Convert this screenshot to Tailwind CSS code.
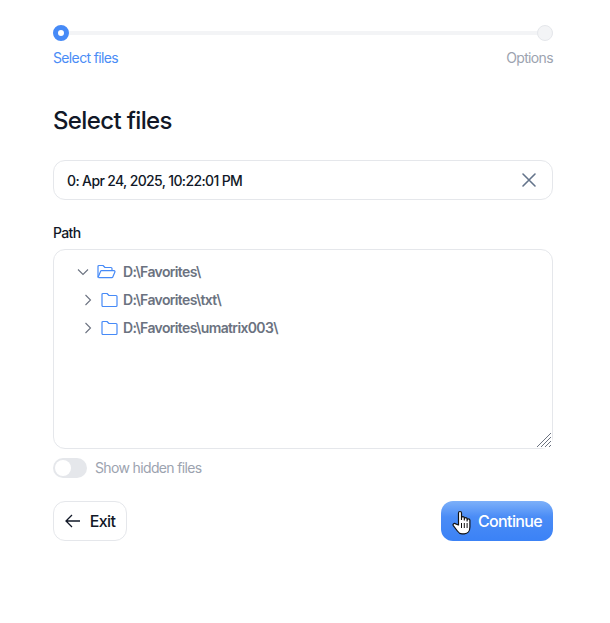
<!DOCTYPE html>
<html lang="en">
<head>
  <meta charset="UTF-8" />
  <meta name="viewport" content="width=device-width, initial-scale=1.0"/>
  <title>Select files</title>
  <script src="https://cdn.jsdelivr.net/npm/@tailwindcss/browser@4"></script>
</head>
<body class="bg-white font-['Inter',sans-serif] tracking-[-0.04em] text-[#111827]">
  <div class="w-[500px] ml-[53px] pt-[25px]">

    <!-- stepper -->
    <div class="relative flex justify-between items-center h-4">
      <div class="absolute left-0 right-0 top-[6px] h-1 bg-[#f3f4f6]"></div>
      <div class="relative w-4 h-4 rounded-full bg-white border-[5px] border-[#468af7]"></div>
      <div class="relative w-4 h-4 rounded-full bg-[#f3f4f6] border border-[#e5e7eb]"></div>
    </div>
    <div class="flex justify-between mt-[7px] text-sm leading-5">
      <span class="text-[#4a8cf6]">Select files</span>
      <span class="text-[#9ca3af]">Options</span>
    </div>

    <h1 class="mt-[37px] text-2xl leading-8 font-medium">Select files</h1>

    <!-- backup select -->
    <div class="mt-[23px] h-10 flex items-center justify-between pl-[13px] pr-[14px] border border-[#e5e7eb] rounded-xl">
      <span class="text-sm font-medium pt-[1px]">0: Apr 24, 2025, 10:22:01 PM</span>
      <svg class="w-[18px] h-[18px] text-[#64748b]" viewBox="0 0 18 18" fill="none" stroke="currentColor" stroke-width="1.6" stroke-linecap="round">
        <path d="M3 3l12 12M15 3L3 15"/>
      </svg>
    </div>

    <label class="block mt-[23px] text-sm leading-5 font-medium">Path</label>

    <!-- tree -->
    <div class="relative mt-[6px] h-[200px] border border-[#e5e7eb] rounded-xl pt-2 text-sm font-semibold text-[#6b7280]">
      <div class="flex items-center h-7 pl-[23px]">
        <svg class="w-[12px] h-[12px] text-[#6b7280]" viewBox="0 0 12 12" fill="none" stroke="currentColor" stroke-width="1.1">
          <path d="M1 3.5l5 5 5-5"/>
        </svg>
        <svg class="ml-[8px] w-[19px] h-[16px] text-[#468af7]" viewBox="0 0 19 16" fill="none" stroke="currentColor" stroke-width="1.2" stroke-linejoin="round">
          <path d="M1 13.5V2.5a1 1 0 0 1 1-1h4l2 2h6a1 1 0 0 1 1 1v2"/>
          <path d="M1 13.5l2.6-6.2a1 1 0 0 1 .9-.6H17a1 1 0 0 1 .9 1.4l-2.1 5a1 1 0 0 1-.9.6H1.5"/>
        </svg>
        <span class="ml-[7px]">D:\Favorites\</span>
      </div>
      <div class="flex items-center h-7 pl-[28px]">
        <svg class="w-[12px] h-[12px] text-[#6b7280]" viewBox="0 0 12 12" fill="none" stroke="currentColor" stroke-width="1.1">
          <path d="M3.5 1l5 5-5 5"/>
        </svg>
        <svg class="ml-[7px] w-[17px] h-[16px] text-[#468af7]" viewBox="0 0 17 16" fill="none" stroke="currentColor" stroke-width="1.2" stroke-linejoin="round">
          <path d="M1 13.5V2.5a1 1 0 0 1 1-1h4l2 2h7a1 1 0 0 1 1 1v9a1 1 0 0 1-1 1H2a1 1 0 0 1-1-1z"/>
        </svg>
        <span class="ml-[5px]">D:\Favorites\txt\</span>
      </div>
      <div class="flex items-center h-7 pl-[28px]">
        <svg class="w-[12px] h-[12px] text-[#6b7280]" viewBox="0 0 12 12" fill="none" stroke="currentColor" stroke-width="1.1">
          <path d="M3.5 1l5 5-5 5"/>
        </svg>
        <svg class="ml-[7px] w-[17px] h-[16px] text-[#468af7]" viewBox="0 0 17 16" fill="none" stroke="currentColor" stroke-width="1.2" stroke-linejoin="round">
          <path d="M1 13.5V2.5a1 1 0 0 1 1-1h4l2 2h7a1 1 0 0 1 1 1v9a1 1 0 0 1-1 1H2a1 1 0 0 1-1-1z"/>
        </svg>
        <span class="ml-[5px]">D:\Favorites\umatrix003\</span>
      </div>
      <!-- resize grip -->
      <svg class="absolute right-0 bottom-0 w-4 h-4 bg-white" viewBox="0 0 16 16" fill="none" stroke="#6b7280" stroke-width="1">
        <path d="M1 15L15 1M5 15L15 5M9 15l6-6M13 15l2-2"/>
      </svg>
    </div>

    <!-- toggle -->
    <div class="flex items-center mt-[9px] h-5">
      <div class="w-[34px] h-5 rounded-full bg-[#e5e7eb] p-[2px]">
        <div class="w-4 h-4 rounded-full bg-white"></div>
      </div>
      <span class="ml-2 text-sm text-[#9ca3af]">Show hidden files</span>
    </div>

    <!-- actions -->
    <div class="flex justify-between mt-[23px]">
      <button class="h-10 w-[74px] flex items-center justify-center gap-[9px] border border-[#e5e7eb] rounded-xl text-base font-medium">
        <svg class="w-4 h-4" viewBox="0 0 16 16" fill="none" stroke="currentColor" stroke-width="1.3">
          <path d="M15 8H1M7 2L1 8l6 6"/>
        </svg>
        Exit
      </button>
      <button class="relative h-10 w-28 rounded-xl bg-gradient-to-b from-[#7db0f9] via-[#4a8cf6] via-40% to-[#3b82f6] text-white text-base font-medium pl-[26px]">
        Continue
        <svg class="absolute left-[11px] top-[9px] w-[20px] h-[25px]" viewBox="0 0 20 25" fill="#fff" stroke="#111" stroke-width="1.2" stroke-linejoin="round">
          <path d="M6.5 15V3a1.5 1.5 0 0 1 3 0v6.5V8a1.4 1.4 0 0 1 2.8 0v2V9a1.4 1.4 0 0 1 2.8 0v2v-.8a1.4 1.4 0 0 1 2.8 0V17c0 4-2.3 6.8-5.6 6.8H10c-2.2 0-3.4-1-4.6-2.8L1.3 15.6c-.9-1.3 1-2.9 2.3-1.7z"/>
          <path d="M9.5 13v5M12.3 13v5M15.1 13v5" fill="none" stroke-width="1"/>
        </svg>
      </button>
    </div>
  </div>
</body>
</html>
